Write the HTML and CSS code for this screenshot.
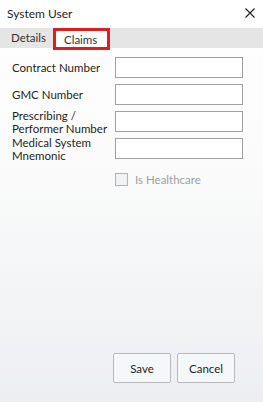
FILE: index.html
```html
<!DOCTYPE html>
<html lang="en">
<head>
    <meta charset="UTF-8">
    <meta name="viewport" content="width=device-width, initial-scale=1.0">
    <title>System User</title>
    <link rel="stylesheet" href="styles.css">
</head>
<body>
    <div class="dialog">
        <!-- title bar -->
        <div class="titlebar">
            <span class="title">System User</span>
            <svg class="close" width="10" height="10" viewBox="0 0 10 10">
                <path d="M0.5 0.5 L9.5 9.5 M9.5 0.5 L0.5 9.5" stroke="#222" stroke-width="1.1" fill="none"/>
            </svg>
        </div>

        <!-- tabs -->
        <div class="tabs">
            <div class="tab">Details</div>
            <div class="tab active">Claims</div>
        </div>

        <!-- claims form -->
        <div class="form">
            <label class="label">Contract Number</label>
            <input class="field" type="text">
            <label class="label">GMC Number</label>
            <input class="field" type="text">
            <label class="label">Prescribing / Performer Number</label>
            <input class="field" type="text">
            <label class="label">Medical System Mnemonic</label>
            <input class="field" type="text">
            <div></div>
            <div class="check-row">
                <span class="checkbox"></span>
                <span>Is Healthcare</span>
            </div>
        </div>

        <!-- buttons -->
        <div class="buttons">
            <button class="btn">Save</button>
            <button class="btn">Cancel</button>
        </div>
    </div>
</body>
</html>
```

FILE: styles.css
```css
body {
    margin: 0;
    padding: 0;
    font-family: "Segoe UI", Lato, "Liberation Sans", sans-serif;
    font-size: 11.5px;
    color: #1e1e1e;
}
.dialog {
    display: flex;
    flex-direction: column;
    height: 100vh;
    background: linear-gradient(to bottom, #ffffff 0%, #fbfbfb 40%, #eceff2 100%);
}
.titlebar {
    display: flex;
    justify-content: space-between;
    align-items: center;
    height: 28px;
    padding: 0 8px 2px 7px;
    box-sizing: border-box;
    background: #ffffff;
}
.title {
    font-size: 12px;
}
.tabs {
    display: flex;
    height: 20px;
    background: #e5e5e5;
    padding-left: 4px;
}
.tab {
    padding: 0 7px 0 7px;
    line-height: 20px;
    color: #333;
}
.tab.active {
    height: 22px;
    box-sizing: border-box;
    padding: 0 10px 0 8px;
    line-height: 18px;
    background: #ffffff;
    border: 3px solid #e11c1c;
}
.form {
    display: grid;
    grid-template-columns: 103px 128px;
    grid-auto-rows: 21px;
    row-gap: 6px;
    padding: 9px 0 0 12px;
    align-items: center;
}
.label {
    line-height: 13px;
    padding-right: 2px;
}
.field {
    height: 21px;
    box-sizing: border-box;
    margin: 0;
    border: 1px solid #a0a0a0;
    background: #ffffff;
}
.check-row {
    display: flex;
    align-items: center;
    gap: 7px;
    margin-top: 8px;
    color: #a0a0a0;
}
.checkbox {
    width: 11px;
    height: 11px;
    border: 1px solid #b4b4b4;
    background: #f1f2f4;
}
.buttons {
    margin-top: auto;
    display: flex;
    justify-content: flex-end;
    gap: 6px;
    padding: 0 28px 19px 0;
}
.btn {
    width: 58px;
    height: 30px;
    font-family: inherit;
    font-size: 11.5px;
    color: #1e1e1e;
    background: #f5f8fb;
    border: 1px solid #b8b8b8;
    border-radius: 2px;
}
```
